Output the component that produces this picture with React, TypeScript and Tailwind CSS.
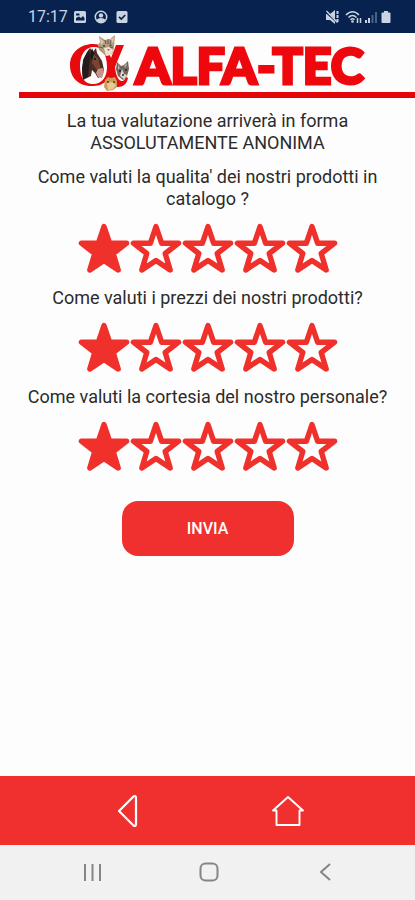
import { useState } from "react";
import type { FormEvent } from "react";

const QUESTIONS = [
  { id: "qualita", text: "Come valuti la qualita' dei nostri prodotti in catalogo ?" },
  { id: "prezzi", text: "Come valuti i prezzi dei nostri prodotti?" },
  { id: "cortesia", text: "Come valuti la cortesia del nostro personale?" },
];

function StatusBar() {
  return (
    <div className="flex h-[33px] shrink-0 items-center justify-between bg-[#08224f] pl-7 pr-6 text-[#c9d3e2]">
      <div className="flex items-center gap-2">
        <span className="w-[38px] text-base">17:17</span>
        <svg className="h-3 w-3" viewBox="0 0 12 12" aria-hidden="true">
          <rect width="12" height="12" rx="1.5" fill="currentColor" />
          <path d="M2 9.5V7l3-1.5 2 1.5 2-2 1.5 2v2.5zM2 2.500h3.500v2H2z" fill="#08224f" />
        </svg>
        <svg className="h-3.5 w-3.5" viewBox="0 0 14 14" aria-hidden="true">
          <circle cx="7" cy="7" r="5.700" fill="none" stroke="currentColor" strokeWidth="1.500" />
          <circle cx="7" cy="5.400" r="2.200" fill="currentColor" />
          <path d="M2.500 10c2-2.800 7-2.800 9 0-2 3-7 3-9 0z" fill="currentColor" />
        </svg>
        <svg className="h-3 w-3" viewBox="0 0 12 12" aria-hidden="true">
          <rect x="0.500" width="11" height="12" rx="1.500" fill="currentColor" />
          <path d="M3 5.800l2.300 2.300L9.200 4" fill="none" stroke="#08224f" strokeWidth="1.700" />
        </svg>
      </div>
      <div className="flex items-center gap-0.5">
        <svg className="h-4 w-[18px]" viewBox="0 0 18 16" aria-hidden="true">
          <path d="M1 5h4l5-4v14l-5-4H1z" fill="currentColor" />
          <path d="M1.500 3.500l11 10" stroke="#08224f" strokeWidth="2" />
          <path d="M1.500 2l11 11.500" stroke="currentColor" strokeWidth="1.400" />
          <path d="M12.500 2v12" stroke="currentColor" strokeWidth="2" strokeDasharray="3 1" />
        </svg>
        <svg className="h-4 w-[18px]" viewBox="0 0 18 16" aria-hidden="true">
          <g fill="none" stroke="currentColor" strokeWidth="1.500">
            <path d="M1 6c4-4.500 9-4.500 13 0M3.500 8.500c2.500-2.700 5.500-2.700 8 0M5.500 10.800c1.300-1.300 2.700-1.300 4 0" />
            <path d="M12.500 9v5M15.500 9v5" />
          </g>
          <circle cx="7.500" cy="12.500" r="1.300" fill="currentColor" />
        </svg>
        <svg className="h-4 w-3" viewBox="0 0 12 16" aria-hidden="true">
          <path d="M0 11h2v3H0zM3 9h2v5H3z" fill="currentColor" />
          <path d="M6.500 6h2v8h-2zM10 3h2v11h-2z" fill="currentColor" opacity="0.350" />
        </svg>
        <svg className="ml-0.5 h-4 w-2.5" viewBox="0 0 10 16" aria-hidden="true">
          <path d="M3 2h4v1.500h1.500q1 0 1 1V13q0 1-1 1h-7q-1 0-1-1V4.500q0-1 1-1H3z" fill="currentColor" />
        </svg>
      </div>
    </div>
  );
}

function AnimalsMark() {
  return (
    <svg className="h-[58px] w-16 shrink-0" viewBox="66 33 64 58" aria-hidden="true">
      {/* ring and tail of the alpha */}
      <path
        fillRule="evenodd"
        fill="#e70b0f"
        d="M92 43c10 0 16 7 18 14l5-13h8l-9 22c1 10 4 14 7 14 2 0 3-2 4-4l2 1c-1 6-5 9-10 9-6 0-9-2-11-7-4 5-9 6-16 6-13 0-21-9-21-21 0-12 10-21 23-21zm1 3c-9 0-14 8-14 19 0 12 5 18 13 18 9 0 14-7 14-17 0-13-5-20-13-20z"
      />
      {/* horse */}
      <path d="M89 47l3 4 3-4 1 5 5 8 2 9-2 6-4 2-3-5-3-3-1 6-8 4-1-8 1-12 4-8z" fill="#4a2c24" />
      <path d="M88 49l-5 8-2 10 1 11 5-2 1-10 1-10z" fill="#241b1c" />
      <path d="M92 53l5 4 3 11-4 1-5-7z" fill="#794532" />
      <path d="M97 68l5-1 1 4-2 6-4-1-2-4z" fill="#c69583" />
      <path d="M91 47l2 5-2 8-2-5z" fill="#171819" />
      <circle cx="94" cy="58" r="1" fill="#111" />
      {/* cat */}
      <path d="M98 35l6 4 5-1 5-4-1 13-2 6-6 2-7-6-1-5 2-3z" fill="#b39b80" />
      <path d="M99 37l4 4-3 3zM113 36l-1 6-3-3z" fill="#dec7ad" />
      <path d="M104 39l1 4M107 38v5M110 39l-1 4M98 46l4 1M112 46l-3 1" stroke="#6c5845" strokeWidth="1" />
      <path d="M103 47l5-1 4 3-2 5-5 1z" fill="#ede2d2" />
      <circle cx="103" cy="45" r="1.100" fill="#454c37" />
      <circle cx="109.500" cy="44.500" r="1.100" fill="#454c37" />
      <path d="M106 48h3l-1.500 2z" fill="#a76c5c" />
      {/* puppy */}
      <path d="M116 61l4 4 3-1 4-4 1 8-2 7-4 4-5-4-2-7z" fill="#72665f" />
      <path d="M117 63l2 4-2 2zM126 62l-1 5-2-2z" fill="#c2a9a0" />
      <path d="M121 68l2 5 3 1-3 4-4-3z" fill="#e4dcd2" />
      <circle cx="119" cy="70" r="1" fill="#222" />
      <circle cx="125" cy="69" r="1" fill="#222" />
      <circle cx="122" cy="74" r="1" fill="#222" />
      {/* hamster */}
      <path d="M104 79l3-3 3 1 4-1 2 4v6l-4 3-6 1-3-4z" fill="#cc9c58" />
      <path d="M106 82l5-1 4 3-3 4-5 1z" fill="#e9cc93" />
      <circle cx="107" cy="81" r="0.900" fill="#493222" />
      <circle cx="113" cy="81" r="0.900" fill="#493222" />
    </svg>
  );
}

function Header() {
  return (
    <header className="flex flex-col">
      <div className="flex h-[59px] items-center justify-center pl-4">
        <AnimalsMark />
        <h1 className="pl-1 pt-1 font-['Lato',sans-serif] text-[50px] font-black leading-none text-[#ee080d] [-webkit-text-stroke:3px_#ee080d]">
          ALFA-TEC
        </h1>
      </div>
      <div className="ml-[19px] h-1.5 bg-[#e30509]" />
    </header>
  );
}

function Star({ filled }: { filled: boolean }) {
  return (
    <svg className="h-[53px] w-[52px]" viewBox="0 0 52 53" aria-hidden="true">
      <path
        d="M26 4.500L31.600 21.200L48.600 21.200L35.200 31.500L40.200 48L26 38.400L11.800 48L16.800 31.500L3.400 21.200L20.400 21.200Z"
        fill={filled ? "#ef302b" : "none"}
        stroke="#ef302b"
        strokeWidth="5.400"
        strokeLinejoin="round"
      />
    </svg>
  );
}

function Question({ id, text }: { id: string; text: string }) {
  const [value, setValue] = useState(1);
  return (
    <fieldset className="flex w-full flex-col items-center">
      <legend className="mb-3 w-full px-5 text-center">{text}</legend>
      <div className="flex">
        {[1, 2, 3, 4, 5].map((n) => (
          <label key={n} className="relative cursor-pointer">
            <input
              type="radio"
              name={id}
              value={n}
              checked={value === n}
              onChange={() => setValue(n)}
              aria-label={String(n)}
              className="absolute inset-0 h-full w-full cursor-pointer appearance-none"
            />
            <Star filled={n <= value} />
          </label>
        ))}
      </div>
    </fieldset>
  );
}

function AppBar() {
  return (
    <nav className="flex h-[69px] shrink-0 items-center justify-around bg-[#f0302f] px-12 text-white">
      <button type="button" aria-label="Indietro">
        <svg className="h-9 w-9" viewBox="0 0 36 36" fill="none" stroke="currentColor" strokeWidth="2.200" strokeLinejoin="round" aria-hidden="true">
          <path d="M9 18L23.500 3.500Q26 2 26 5V31Q26 34 23.500 32.500Z" />
        </svg>
      </button>
      <button type="button" aria-label="Home">
        <svg className="h-9 w-9" viewBox="0 0 36 36" fill="none" stroke="currentColor" strokeWidth="1.900" strokeLinejoin="round" aria-hidden="true">
          <path d="M19 4L34 17.500H30.500V32H7.500V17.500H4Z" />
        </svg>
      </button>
    </nav>
  );
}

function SystemBar() {
  return (
    <nav className="flex h-[55px] shrink-0 items-center justify-around bg-[#f1f1f1] px-8 text-[#858585]">
      <button type="button" aria-label="Recenti">
        <svg className="h-6 w-6" viewBox="0 0 24 24" fill="none" stroke="currentColor" strokeWidth="2" aria-hidden="true">
          <path d="M6 3v17M13.500 3v17M21 3v17" />
        </svg>
      </button>
      <button type="button" aria-label="Schermata Home">
        <svg className="h-6 w-6" viewBox="0 0 24 24" fill="none" stroke="currentColor" strokeWidth="2" aria-hidden="true">
          <rect x="4.500" y="2.500" width="17" height="17" rx="5" />
        </svg>
      </button>
      <button type="button" aria-label="Torna indietro">
        <svg className="h-6 w-6" viewBox="0 0 24 24" fill="none" stroke="currentColor" strokeWidth="2" aria-hidden="true">
          <path d="M17 3L8 11L17 19" />
        </svg>
      </button>
    </nav>
  );
}

export default function App() {
  const submit = (event: FormEvent) => event.preventDefault();
  return (
    <div className="flex min-h-screen flex-col bg-[#fdfdfd] font-['Roboto',sans-serif]">
      <StatusBar />
      <Header />
      <main className="flex-1 pt-3 text-lg leading-[22px] text-[#2b2b2b]">
        <p className="px-12 text-center">
          La tua valutazione arriverà in forma ASSOLUTAMENTE ANONIMA
        </p>
        <form onSubmit={submit} className="mt-3 flex flex-col items-center gap-3">
          {QUESTIONS.map((q) => (
            <Question key={q.id} id={q.id} text={q.text} />
          ))}
          <button
            type="submit"
            className="mt-4 h-[55px] w-[172px] rounded-2xl bg-[#f0302f] text-base font-medium text-white"
          >
            INVIA
          </button>
        </form>
      </main>
      <AppBar />
      <SystemBar />
    </div>
  );
}
